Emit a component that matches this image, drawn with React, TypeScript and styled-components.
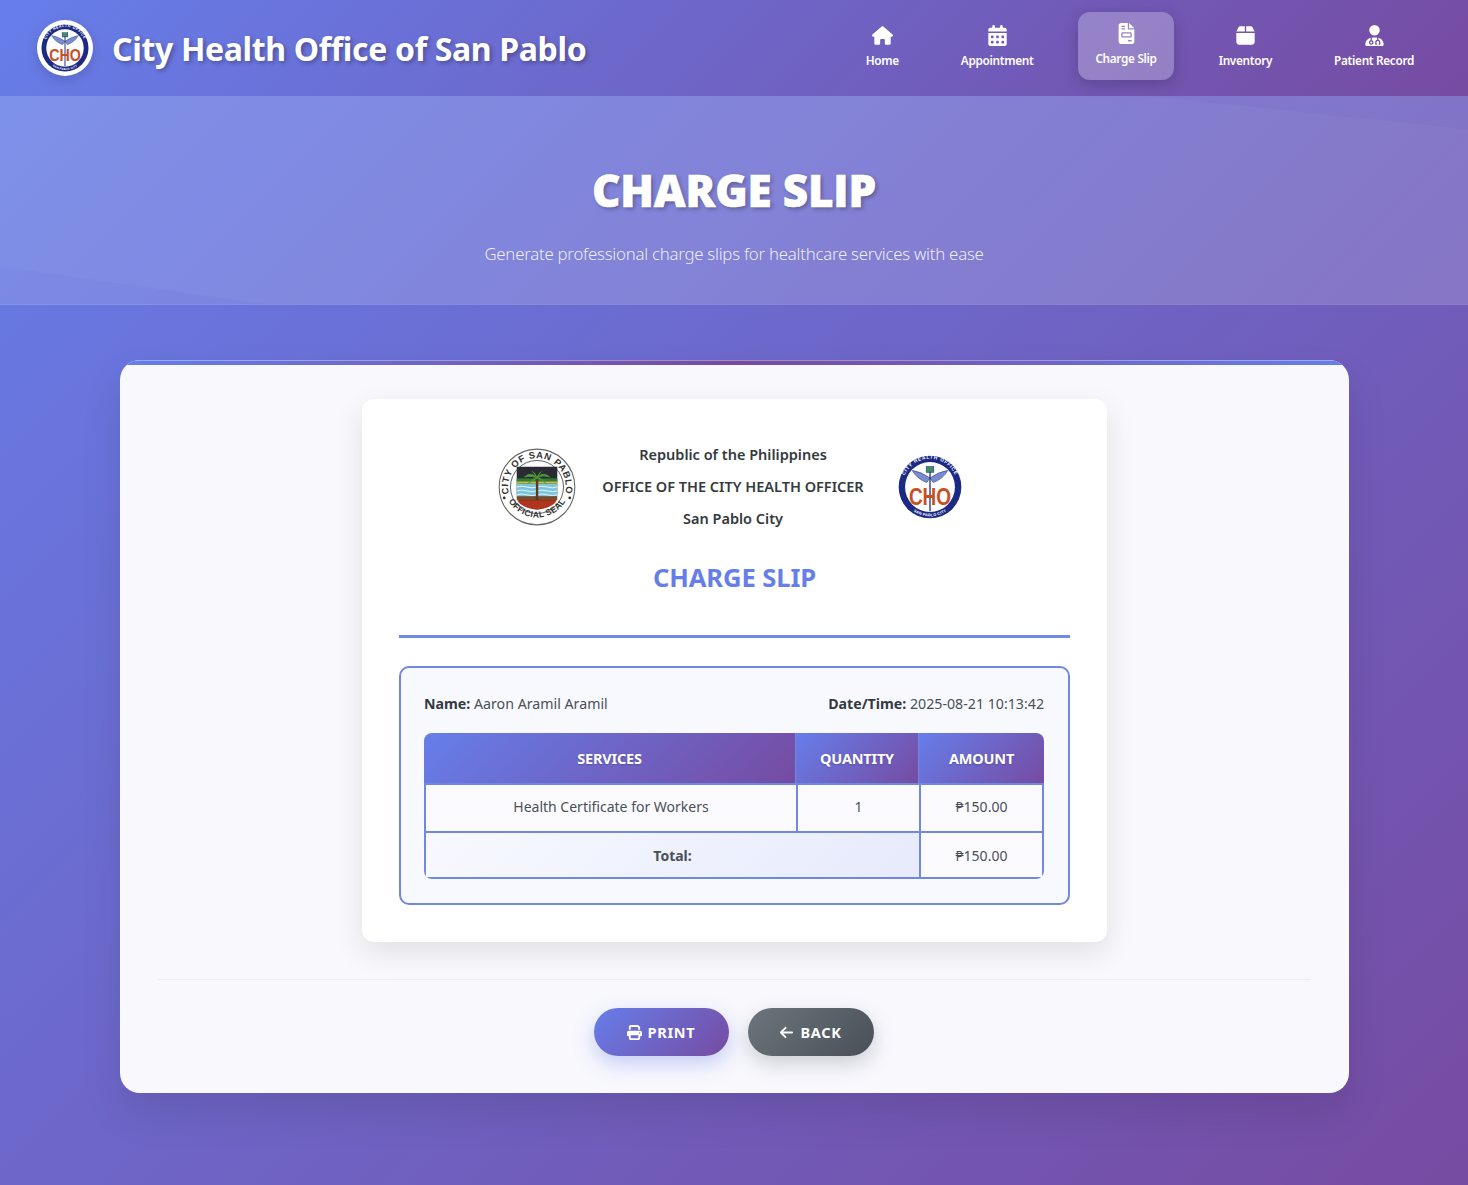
import React from "react";
import styled, { createGlobalStyle } from "styled-components";
import { FaHouse, FaCalendarDays, FaFileInvoice, FaBox, FaUserDoctor, FaPrint, FaArrowLeft } from "react-icons/fa6";

const Global = createGlobalStyle`
  html, body { margin: 0; padding: 0; }
  body {
    min-height: 1185px;
    background: linear-gradient(135deg, #667eea 0%, #764ba2 100%);
    font-family: "Noto Sans", "Open Sans", sans-serif;
    color: #333;
  }
  * { box-sizing: border-box; }
`;

const Header = styled.header`
  height: 96px;
  padding: 0 37px;
  display: flex;
  align-items: center;
  justify-content: space-between;
  background: linear-gradient(135deg, #667eea 0%, #764ba2 100%);
`;
const Brand = styled.div`
  display: flex;
  align-items: center;
  gap: 19px;
`;
const BrandLogo = styled.div`
  width: 56px;
  height: 56px;
  border-radius: 50%;
  border: 4px solid rgba(255, 255, 255, 0.85);
  background: #fff;
  display: flex;
  align-items: center;
  justify-content: center;
  box-shadow: 0 4px 12px rgba(0, 0, 0, 0.15);
`;
const BrandTitle = styled.h1`
  margin: 2px 0 0;
  font-size: 32px;
  font-weight: 700;
  line-height: 40px;
  letter-spacing: -0.34px;
  color: #fff;
  text-shadow: 2px 2px 4px rgba(0, 0, 0, 0.3);
`;
const Nav = styled.nav`
  display: flex;
  align-items: center;
  gap: 28px;
`;
const NavItem = styled.a<{ $active?: boolean }>`
  height: 68px;
  padding: 11px 17px 0;
  display: flex;
  flex-direction: column;
  align-items: center;
  gap: 6px;
  border-radius: 12px;
  color: #fff;
  font-size: 11.8px;
  font-weight: 600;
  line-height: 16px;
  white-space: nowrap;
  letter-spacing: -0.33px;
  background: ${(p) => (p.$active ? "rgba(255,255,255,0.25)" : "transparent")};
  box-shadow: ${(p) => (p.$active ? "0 4px 15px rgba(0,0,0,0.2)" : "none")};
  transform: ${(p) => (p.$active ? "translateY(-2px)" : "none")};
  svg { height: 21px; width: auto; display: block; }
`;

const Hero = styled.section`
  position: relative;
  overflow: hidden;
  height: 209px;
  display: flex;
  flex-direction: column;
  align-items: center;
  background: rgba(255, 255, 255, 0.13);
  border-bottom: 1px solid rgba(255, 255, 255, 0.08);
  &::before {
    content: "";
    position: absolute;
    inset: 0;
    background: rgba(255, 255, 255, 0.035);
    clip-path: polygon(0 0, 78% 0, 100% 16%, 100% 100%, 18% 100%, 0 82%);
  }
`;
const HeroTitle = styled.h2`
  position: relative;
  margin: 68px 0 0;
  font-family: "Open Sans", "Noto Sans", sans-serif;
  font-size: 44px;
  line-height: 52px;
  font-weight: 800;
  letter-spacing: -0.2px;
  color: #fff;
  -webkit-text-stroke: 0.6px #fff;
  text-shadow: 2px 2px 4px rgba(0, 0, 0, 0.3);
`;
const HeroSub = styled.p`
  position: relative;
  margin: 26px 0 0;
  font-size: 16.8px;
  line-height: 24px;
  font-weight: 300;
  letter-spacing: -0.24px;
  color: rgba(255, 255, 255, 0.88);
`;

const Main = styled.main`
  padding: 55px 119px 56px 120px;
`;
const Card = styled.div`
  position: relative;
  overflow: hidden;
  height: 733px;
  padding: 39px 38px 0;
  border-radius: 20px;
  background: #f8f8fd;
  box-shadow: 0 20px 40px rgba(0, 0, 0, 0.1);
  &::before {
    content: "";
    position: absolute;
    top: 0;
    left: 0;
    right: 0;
    height: 4px;
    border-top: 1px solid rgba(255, 255, 255, 0.35);
    background: linear-gradient(90deg, #667eea, #764ba2 50%, #667eea);
  }
`;
const Slip = styled.div`
  width: 745px;
  height: 543px;
  margin: 0 auto;
  padding: 40px 37px 0;
  border-radius: 12px;
  background: #fff;
  box-shadow: 0 10px 30px rgba(0, 0, 0, 0.1);
`;
const LetterHead = styled.div`
  display: flex;
  justify-content: center;
  align-items: center;
  gap: 26px;
  height: 96px;
  padding-right: 9px;
`;
const LeftSeal = styled.div`
  width: 78px;
  height: 78px;
  margin-bottom: 1px;
`;
const RightSeal = styled.div`
  width: 64px;
  height: 64px;
  margin-left: 8px;
  margin-bottom: 1px;
`;
const HeadText = styled.div`
  text-align: center;
  font-size: 14.5px;
  font-weight: 600;
  line-height: 31.7px;
  color: #343a40;
  white-space: nowrap;
`;
const SlipTitle = styled.h3`
  margin: 26px 0 0;
  text-align: center;
  font-size: 25.6px;
  font-weight: 700;
  line-height: 34px;
  color: #667eea;
  letter-spacing: -0.1px;
`;
const Rule = styled.div`
  height: 3px;
  margin-top: 40px;
  background: #7088e8;
`;
const InfoBox = styled.div`
  margin-top: 28px;
  height: 239px;
  padding: 24px 24px 0 23px;
  border: 2px solid #7088e0;
  border-radius: 10px;
  background: #f8f9ff;
`;
const InfoRow = styled.div`
  display: flex;
  justify-content: space-between;
  font-size: 14.2px;
  line-height: 24px;
  color: #495057;
  strong { font-weight: 700; color: #343a40; }
`;
const Table = styled.table`
  width: 620px;
  margin-top: 17px;
  table-layout: fixed;
  border-collapse: separate;
  border-spacing: 0;
  border-radius: 8px;
  overflow: hidden;
`;
const Th = styled.th`
  height: 50px;
  padding: 0;
  font-size: 14.5px;
  font-weight: 700;
  letter-spacing: -0.2px;
  color: #fff;
  background: linear-gradient(135deg, #667eea 0%, #764ba2 100%);
  border-right: 1px solid #7088e0;
  text-shadow: 0 1px 2px rgba(0, 0, 0, 0.2);
  &:last-child { border-right: 0; }
`;
const Td = styled.td<{ $total?: boolean; $last?: boolean }>`
  height: 48px;
  padding: 0 0 ${(p) => (p.$last ? "0" : "3px")};
  text-align: center;
  font-size: 14px;
  color: #495057;
  font-weight: ${(p) => (p.$total ? 700 : 400)};
  background: ${(p) => (p.$total ? "linear-gradient(135deg, #f8f9ff 0%, #e6eafc 100%)" : "#fbfbff")};
  border-left: 2px solid #7088e0;
  border-top: 2px solid #7088e0;
  border-bottom: ${(p) => (p.$last ? "2px solid #7088e0" : "0")};
  &:last-child { border-right: 2px solid #7088e0; }
`;
const CardFooter = styled.div`
  margin-top: 37px;
  padding: 28px 2px 0 0;
  border-top: 1px solid #ececf2;
  display: flex;
  justify-content: center;
  gap: 19px;
`;
const ActionButton = styled.button<{ $variant: "print" | "back" }>`
  height: 48px;
  width: ${(p) => (p.$variant === "print" ? "135px" : "126px")};
  border: 0;
  border-radius: 24px;
  display: flex;
  align-items: center;
  justify-content: center;
  gap: 6px;
  font-family: inherit;
  font-size: 14.5px;
  font-weight: 700;
  letter-spacing: 0.7px;
  color: #fff;
  background: ${(p) =>
    p.$variant === "print"
      ? "linear-gradient(135deg, #667eea 0%, #764ba2 100%)"
      : "linear-gradient(135deg, #6c757d 0%, #495057 100%)"};
  box-shadow: ${(p) =>
    p.$variant === "print" ? "0 8px 20px rgba(102,126,234,0.35)" : "0 8px 20px rgba(108,117,125,0.3)"};
  svg { height: 15px; width: auto; }
`;

const SanPabloSeal = () => (
  <svg viewBox="0 0 100 100" width="100%" height="100%" role="img" aria-label="City of San Pablo official seal">
    <defs>
      <path id="sealTop" d="M 15 62 A 37 37 0 1 1 85 62" />
      <path id="sealBottom" d="M 10 60 A 42 42 0 0 0 90 60" />
    </defs>
    <circle cx="50" cy="50" r="48.5" fill="#fff" stroke="#666" strokeWidth="1.4" />
    <circle cx="50" cy="50" r="34" fill="#fff" stroke="#333" strokeWidth="1" />
    <text fontFamily="Liberation Sans, sans-serif" fontSize="12" fontWeight="700" fill="#333" letterSpacing="0.8">
      <textPath href="#sealTop" startOffset="50%" textAnchor="middle">CITY OF SAN PABLO</textPath>
    </text>
    <text fontFamily="Liberation Sans, sans-serif" fontSize="11" fontWeight="700" fill="#333" letterSpacing="0.4">
      <textPath href="#sealBottom" startOffset="50%" textAnchor="middle">OFFICIAL SEAL</textPath>
    </text>
    <circle cx="8" cy="64" r="1.8" fill="#333" />
    <circle cx="92" cy="64" r="1.8" fill="#333" />
    <path d="M 24 24 H 76 V 60 Q 74 76 50 79 Q 26 76 24 60 Z" fill="#2a2a33" />
    <rect x="24" y="39" width="52" height="6" fill="#2f7d32" />
    <rect x="24" y="43" width="52" height="2.5" fill="#d8b928" />
    <rect x="24" y="45.5" width="52" height="17" fill="#7cc5dd" />
    <path d="M24 50 q 6 -2 13 0 t 13 0 t 13 0 t 13 0 M24 55 q 6 -2 13 0 t 13 0 t 13 0 t 13 0 M24 60 q 6 -2 13 0 t 13 0 t 13 0 t 13 0" stroke="#e8f6fa" strokeWidth="1.2" fill="none" />
    <path d="M 24 62 H 76 V 67 H 24 Z" fill="#7a4b2c" />
    <path d="M 25 67 H 75 Q 72 76 50 79 Q 28 76 25 67 Z" fill="#b3341c" />
    <rect x="48.6" y="38" width="3" height="29" fill="#5b3a1e" />
    <path d="M50 38 Q 42 30 34 37 Q 42 35 50 38 Q 44 40 38 46 Q 46 42 50 38 Q 56 40 62 46 Q 58 40 50 38 Q 58 34 66 37 Q 58 30 50 38 Q 48 32 44 30 M50 38 Q 52 32 56 30" fill="#4f9e3a" stroke="#4f9e3a" strokeWidth="1" />
  </svg>
);
const ChoSeal = ({ idSuffix }: { idSuffix: string }) => (
  <svg viewBox="0 0 100 100" width="100%" height="100%" role="img" aria-label="City Health Office seal">
    <defs>
      <path id={`choTop${idSuffix}`} d="M 9 62 A 43 43 0 1 1 91 62" />
      <path id={`choBottom${idSuffix}`} d="M 22 86 A 44.5 44.5 0 0 0 78 86" />
    </defs>
    <circle cx="50" cy="50" r="49" fill="#1c2a84" />
    <circle cx="50" cy="50" r="39" fill="#fff" />
    <text fontFamily="Liberation Sans, sans-serif" fontSize="7.5" fontWeight="700" fill="#fff" letterSpacing="1.2">
      <textPath href={`#choTop${idSuffix}`} startOffset="50%" textAnchor="middle">CITY HEALTH OFFICE</textPath>
    </text>
    <text fontFamily="Liberation Sans, sans-serif" fontSize="6" fontWeight="700" fill="#fff" letterSpacing="0.3">
      <textPath href={`#choBottom${idSuffix}`} startOffset="50%" textAnchor="middle">SAN PABLO CITY</textPath>
    </text>
    <path d="M50 36 Q 36 26 22 24 Q 30 38 45 43 Z M50 36 Q 64 26 78 24 Q 70 38 55 43 Z" fill="#7b8ccc" stroke="#1c2a84" strokeWidth="0.8" />
    <rect x="44" y="18" width="12" height="9" fill="#3d8f5f" stroke="#1c2a84" strokeWidth="0.8" />
    <rect x="49" y="26" width="2" height="62" fill="#1c2a84" />
    <text x="50" y="78" textAnchor="middle" fontFamily="Liberation Sans, sans-serif" fontSize="36" fontWeight="700" fill="#c8501f" textLength="66" lengthAdjust="spacingAndGlyphs">CHO</text>
  </svg>
);

const navItems = [
  { label: "Home", icon: <FaHouse /> },
  { label: "Appointment", icon: <FaCalendarDays /> },
  { label: "Charge Slip", icon: <FaFileInvoice />, active: true },
  { label: "Inventory", icon: <FaBox /> },
  { label: "Patient Record", icon: <FaUserDoctor /> },
];

export default function App() {
  return (
    <>
      <Global />
      <Header>
        <Brand>
          <BrandLogo><ChoSeal idSuffix="a" /></BrandLogo>
          <BrandTitle>City Health Office of San Pablo</BrandTitle>
        </Brand>
        <Nav>
          {navItems.map((n) => (
            <NavItem key={n.label} $active={n.active}>
              {n.icon}
              {n.label}
            </NavItem>
          ))}
        </Nav>
      </Header>
      <Hero>
        <HeroTitle>CHARGE SLIP</HeroTitle>
        <HeroSub>Generate professional charge slips for healthcare services with ease</HeroSub>
      </Hero>
      <Main>
        <Card>
          <Slip>
            <LetterHead>
              <LeftSeal><SanPabloSeal /></LeftSeal>
              <HeadText>
                <div>Republic of the Philippines</div>
                <div>OFFICE OF THE CITY HEALTH OFFICER</div>
                <div>San Pablo City</div>
              </HeadText>
              <RightSeal><ChoSeal idSuffix="b" /></RightSeal>
            </LetterHead>
            <SlipTitle>CHARGE SLIP</SlipTitle>
            <Rule />
            <InfoBox>
              <InfoRow>
                <span><strong>Name:</strong> Aaron Aramil Aramil</span>
                <span><strong>Date/Time:</strong> 2025-08-21 10:13:42</span>
              </InfoRow>
              <Table>
                <colgroup>
                  <col style={{ width: 372 }} />
                  <col style={{ width: 123 }} />
                  <col style={{ width: 125 }} />
                </colgroup>
                <thead>
                  <tr>
                    <Th>SERVICES</Th>
                    <Th>QUANTITY</Th>
                    <Th>AMOUNT</Th>
                  </tr>
                </thead>
                <tbody>
                  <tr>
                    <Td>Health Certificate for Workers</Td>
                    <Td>1</Td>
                    <Td>₱150.00</Td>
                  </tr>
                  <tr>
                    <Td $total $last colSpan={2}>Total:</Td>
                    <Td $last>₱150.00</Td>
                  </tr>
                </tbody>
              </Table>
            </InfoBox>
          </Slip>
          <CardFooter>
            <ActionButton $variant="print"><FaPrint /> PRINT</ActionButton>
            <ActionButton $variant="back"><FaArrowLeft /> BACK</ActionButton>
          </CardFooter>
        </Card>
      </Main>
    </>
  );
}
